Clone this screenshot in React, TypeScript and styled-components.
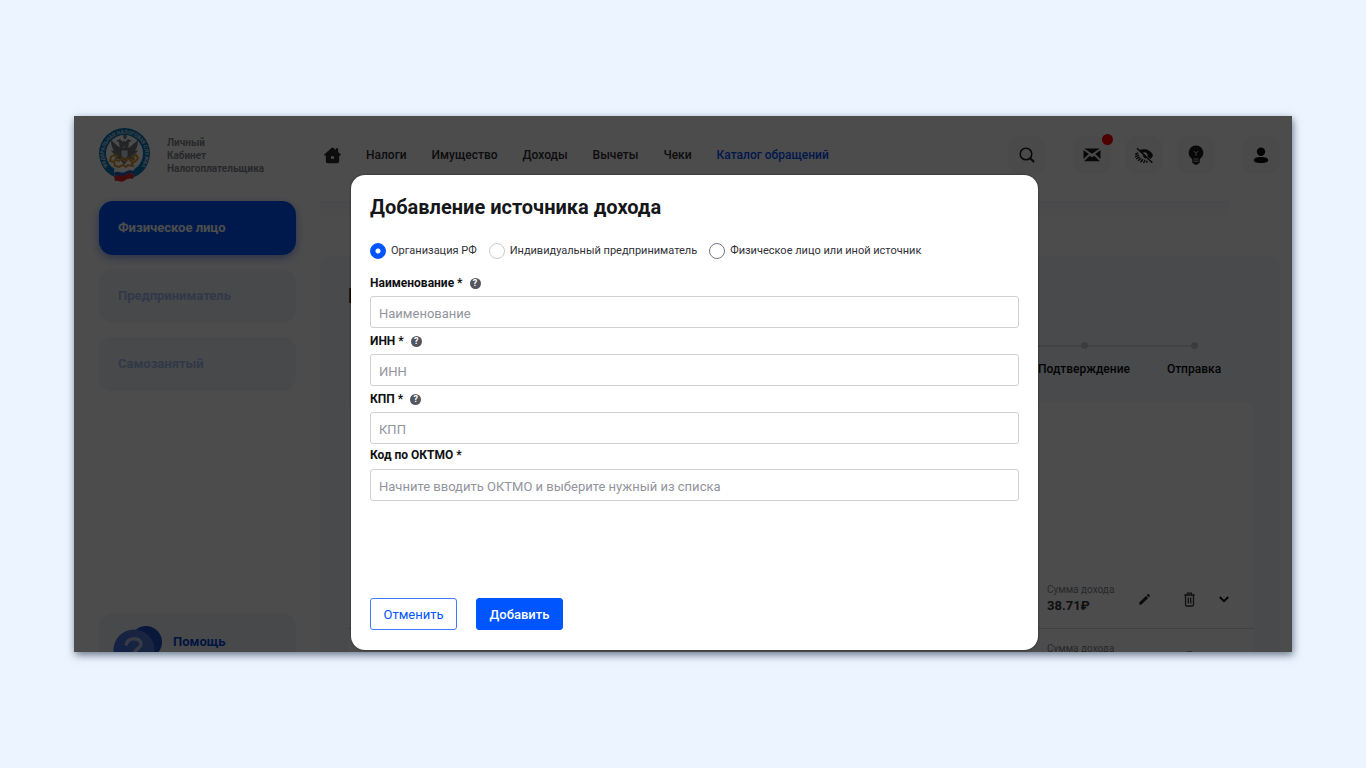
import React from 'react';
import styled, { createGlobalStyle } from 'styled-components';

const GlobalStyle = createGlobalStyle`
  *, *::before, *::after { box-sizing: border-box; }
  body { margin: 0; font-family: Roboto, "Liberation Sans", sans-serif; }
  h1, h2, p { margin: 0; }
  button, input { font: inherit; }
`;

const Page = styled.div`
  display: flex;
  height: 100vh;
  min-height: 700px;
  padding: 116px 74px;
  background: #ecf5ff;
`;

const Window = styled.div`
  position: relative;
  flex: 1;
  display: flex;
  flex-direction: column;
  overflow: hidden;
  background: #fff;
  box-shadow: 1px 3px 8px rgba(20, 35, 60, 0.6);
`;

const Frame = styled.div`
  display: flex;
  flex: 1;
  min-width: 0;
`;

/* ---------- header ---------- */

const Header = styled.header`
  display: flex;
  align-items: center;
  flex: none;
  height: 78px;
  padding: 0 12px 0 25px;
`;

const Brand = styled.a`
  display: flex;
  align-items: center;
  gap: 17px;
  width: 225px;
  color: #85878f;
  font-size: 10px;
  font-weight: 700;
  line-height: 13px;
  text-decoration: none;
`;

const Nav = styled.nav`
  display: flex;
  align-items: center;
  gap: 25px;
`;

const NavLink = styled.a<{ $active?: boolean }>`
  display: flex;
  color: ${p => (p.$active ? '#0050ff' : '#2c2d30')};
  font-size: 12px;
  font-weight: 500;
  line-height: 16px;
  text-decoration: none;
  white-space: nowrap;
`;

const Tools = styled.div`
  display: flex;
  gap: 27px;
  margin-left: auto;
`;

const ToolGroup = styled.div`
  display: flex;
  gap: 14px;
`;

const ToolButton = styled.button`
  position: relative;
  display: grid;
  place-items: center;
  width: 38px;
  height: 38px;
  padding: 0;
  border: 0;
  border-radius: 12px;
  background: #f7f7f8;
  color: #1c1d20;
`;

const Badge = styled.span`
  position: absolute;
  top: -2px;
  right: -2px;
  width: 11px;
  height: 11px;
  border-radius: 50%;
  background: #ff0000;
`;

/* ---------- sidebar ---------- */

const Sidebar = styled.aside`
  display: flex;
  flex: none;
  flex-direction: column;
  gap: 14px;
  width: 222px;
  padding: 7px 0 0 25px;
`;

const RoleButton = styled.button<{ $active?: boolean }>`
  flex: none;
  height: 54px;
  padding: 0 19px 2px;
  border: 0;
  border-radius: 14px;
  background: ${p => (p.$active ? '#0055ff' : '#f1f4fb')};
  box-shadow: ${p => (p.$active ? '0 3px 8px rgba(0, 60, 220, 0.45)' : 'none')};
  color: ${p => (p.$active ? '#ffffff' : '#a6bff2')};
  font-size: 13px;
  font-weight: 700;
  text-align: left;
`;

const HelpCard = styled.a`
  display: flex;
  align-items: flex-start;
  gap: 10px;
  flex: none;
  height: 80px;
  margin-top: 208px;
  padding: 13px 14px;
  border-radius: 14px;
  background: #f1f4fb;
  color: #0046dc;
  font-size: 13px;
  font-weight: 700;
  line-height: 32px;
  text-decoration: none;
`;

/* ---------- main area ---------- */

const Main = styled.main`
  display: flex;
  flex: 1;
  flex-direction: column;
  min-width: 0;
  padding: 7px 12px 0 24px;
`;

const SubBar = styled.div`
  flex: none;
  height: 55px;
  margin-right: 50px;
  background: linear-gradient(#f5f6fa, #ffffff 20px);
`;

const Panel = styled.section`
  display: flex;
  flex: 1;
  flex-direction: column;
  padding: 28px 26px 0 28px;
  border-radius: 14px 14px 0 0;
  background: #f4f7fc;
`;

const PanelTitle = styled.h1`
  height: 58px;
  color: #222;
  font-size: 20px;
  line-height: 24px;
`;

const Steps = styled.ol`
  display: flex;
  justify-content: flex-end;
  height: 60px;
  margin: 0;
  padding: 0 5px 0 0;
  list-style: none;
`;

const Step = styled.li<{ $last?: boolean }>`
  display: flex;
  flex-direction: column;
  align-items: center;
  gap: 13px;
  width: 110px;
  color: #0c0d10;
  font-size: 12px;
  font-weight: 500;
  line-height: 14px;

  &::before {
    content: '';
    width: 7px;
    height: 7px;
    border-radius: 50%;
    background: #c8cacd;
  }
  background: linear-gradient(#dadce0, #dadce0) no-repeat 0 3px / ${p => (p.$last ? '50%' : '100%')} 2px;
`;

const Card = styled.div`
  flex: 1;
  padding-top: 168px;
  border-radius: 8px 8px 0 0;
  background: #fff;
`;

const IncomeRow = styled.div`
  display: flex;
  align-items: flex-start;
  justify-content: flex-end;
  height: 59px;
  padding: 12px 20px 0;
  border-bottom: 1px solid #d8dadd;
`;

const Amount = styled.div`
  width: 87px;
  color: #333438;
  font-size: 13px;
  font-weight: 700;
  line-height: 16px;
`;

const AmountCaption = styled.div`
  color: #85878d;
  font-size: 10px;
  font-weight: 400;
`;

const IconButton = styled.button`
  display: grid;
  place-items: center;
  width: 20px;
  height: 34px;
  padding: 0;
  border: 0;
  background: none;
  color: #1f2023;
`;

const RowActions = styled.div`
  display: grid;
  grid-template-columns: 45px 35px 20px;
`;

/* ---------- dialog ---------- */

const Backdrop = styled.div`
  position: absolute;
  inset: 0;
  display: flex;
  padding: 59px 254px 2px 277px;
  background: rgba(0, 0, 0, 0.7);
`;

const Dialog = styled.form`
  display: flex;
  flex: 1;
  flex-direction: column;
  min-width: 0;
  padding: 20px 19px;
  border-radius: 14px;
  background: #fff;
  box-shadow: 0 0 2px rgba(0, 0, 0, 0.6);
`;

const DialogTitle = styled.h2`
  color: #16171a;
  font-size: 20px;
  line-height: 24px;
`;

const RadioGroup = styled.div`
  display: flex;
  align-items: center;
  gap: 12px;
  height: 16px;
  margin: 24px 0 11px;
`;

const RadioLabel = styled.label`
  display: flex;
  align-items: center;
  gap: 5px;
  color: #303136;
  font-size: 11px;
  line-height: 16px;
  white-space: nowrap;
`;

const Radio = styled.input<{ $muted?: boolean }>`
  appearance: none;
  width: 16px;
  height: 16px;
  margin: 0;
  border: 1px solid ${p => (p.$muted ? '#c9cacf' : '#777a84')};
  border-radius: 50%;

  &:checked {
    border-color: #0055ff;
    background: radial-gradient(circle, #fff 2px, #0055ff 3px);
  }
`;

const FieldHead = styled.div<{ $compact?: boolean }>`
  display: flex;
  align-items: center;
  gap: 7px;
  height: ${p => (p.$compact ? 25 : 26)}px;
  padding-bottom: ${p => (p.$compact ? 3 : 0)}px;
`;

const FieldLabel = styled.label`
  color: #101114;
  font-size: 12px;
  font-weight: 700;
  line-height: 16px;
`;

const Hint = styled.button`
  display: grid;
  place-items: center;
  width: 11px;
  height: 11px;
  margin-top: 1px;
  padding: 0;
  border: 0;
  border-radius: 50%;
  background: #53565e;
  color: #fff;
  font-size: 9px;
  font-weight: 700;
  line-height: 11px;
`;

const TextInput = styled.input`
  display: block;
  width: 100%;
  height: 32px;
  padding: 2px 8px 0;
  border: 1px solid #cfd0d3;
  border-radius: 3px;
  background: #fff;
  color: #16171a;
  font-size: 13px;

  &::placeholder { color: #92949d; opacity: 1; }
`;

const Actions = styled.div`
  display: flex;
  gap: 19px;
  margin-top: auto;
`;

const ActionButton = styled.button<{ $primary?: boolean }>`
  width: 87px;
  height: 32px;
  padding: 0;
  border: 1px solid ${p => (p.$primary ? '#0055ff' : '#3f7bff')};
  border-radius: 3px;
  background: ${p => (p.$primary ? '#0055ff' : '#fff')};
  color: ${p => (p.$primary ? '#fff' : '#0055ff')};
  font-size: 13px;
  font-weight: ${p => (p.$primary ? 500 : 400)};
`;

/* ---------- drawings ---------- */

const Emblem = () => (
  <svg width="51" height="54" viewBox="0 0 51 54" aria-hidden="true">
    <circle cx="25.5" cy="25.5" r="25.5" fill="#0878bd" />
    <circle cx="25.5" cy="25.5" r="18.5" fill="#fff" />
    <defs>
      <path id="ring" d="M11.500 41.500A20.600 20.600 0 1 1 39.500 41.500" />
    </defs>
    <text fill="#d5e2ec" fontSize="5" fontWeight="700" fontFamily="Roboto, sans-serif">
      <textPath href="#ring" startOffset="50%" textAnchor="middle">ФЕДЕРАЛЬНАЯ НАЛОГОВАЯ СЛУЖБА</textPath>
    </text>
    <g fill="#77797d">
      <path d="M22 20c-3-1-6-5-10-8 0 4 1 8 3 11l-3-1c1 3 4 5 7 6l-3 3h5l4 6 5-6h5l-3-3c3-1 6-3 7-6l-3 1c2-3 3-7 3-11-4 3-7 7-10 8z" />
      <path d="M21 11l-4 2 3 1 1 8h3l1-5 1 5h3l1-8 3-1-4-2-3 3-1-2-1 2z" />
      <path d="M24 8l2-2 2 2-1 3h-2z" />
    </g>
    <path d="M22 22h7v6l-3 3-4-3z" fill="#d8d9dc" stroke="#606267" strokeWidth=".7" />
    <path d="M12 29l3-2 3 2-2 3 4 1 3-3 3 3 3-3 3 3 3-2-1-3 3-1 2 3-2 3-4 2 1 3-5-1-2 2-3-2-4 2-4-1-1-4-4-1z" fill="none" stroke="#d8982c" strokeWidth="2" />
    <path d="M15 42c4-3 7 1 11-1s5-2 9-1l-1 11c-4-1-6 0-9 2s-6-1-9 0z" fill="#fff" />
    <path d="M15 45c4-3 7 1 11-1s5-2 9-1v3c-4-1-6 0-9 2s-6-1-10 0z" fill="#1e63c4" />
    <path d="M15 48c4-2 7 1 11-1s5-2 9-1l-1 5c-4-1-6 0-9 2s-6-1-9 0z" fill="#e02828" />
  </svg>
);

const HomeIcon = () => (
  <svg width="17" height="17" viewBox="0 0 17 17" fill="currentColor" aria-hidden="true">
    <path fillRule="evenodd" d="M7.400 1a1.600 1.600 0 0 1 2.200 0l2.300 2V1.300h2.200V5l2.400 2.200c.7.700.3 1.400-.5 1.400h-.8v5.600a2 2 0 0 1-2 2H3.800a2 2 0 0 1-2-2V8.600H1C.2 8.600-.2 7.900.5 7.200zM7 9.200v2.600h3V9.200z" />
  </svg>
);

const SearchIcon = () => (
  <svg width="16" height="16" viewBox="0 0 16 16" fill="none" stroke="currentColor" strokeWidth="1.500" aria-hidden="true">
    <circle cx="7" cy="7" r="5.800" />
    <path d="M11 11l4 4" strokeWidth="1.900" />
  </svg>
);

const MailIcon = () => (
  <svg width="18" height="14" viewBox="0 0 18 14" fill="currentColor" aria-hidden="true">
    <path d="M1.200.5h15.600L9 5.800z" />
    <path d="M.5 2L5.800 6 .5 11zM17.500 2L12.200 6l5.300 5zM1 13.300l5.800-5.600L9 9.200l2.200-1.500 5.800 5.600z" />
  </svg>
);

const EyeOffIcon = () => (
  <svg width="20" height="17" viewBox="0 0 20 17" aria-hidden="true">
    <path
      d="M5 3.300C9.500 1 16.500 2 19 8.200c-.6 1.600-1.500 2.900-2.800 3.900L13.600 9.700C14.500 6.500 11.500 4.200 8.500 5.800z"
      fill="currentColor"
    />
    <path
      d="M1.200 7.500l3-1.500M1 9.800l4-1.600M2.200 11.900l3.600-2M4 13.800l3.200-2.600M6.500 15.300l2.500-3M9.500 16l1.700-3.200M12.500 15.700l.7-2"
      fill="none"
      stroke="currentColor"
      strokeWidth="1.400"
    />
    <path d="M9.500 8.200l2.700 2.600" stroke="currentColor" strokeWidth="2.500" />
    <path d="M3 1.200l15.300 14.600" stroke="currentColor" strokeWidth="1.500" />
  </svg>
);

const BulbIcon = () => (
  <svg width="16" height="20" viewBox="0 0 16 20" aria-hidden="true">
    <path d="M8 .5a7.300 7.300 0 0 0-5 12.600c1 .9 1.300 1.400 1.300 2.400v2c0 .6.400 1 1 1h.7l.8 1.200h2.400l.8-1.200h.7c.6 0 1-.4 1-1v-2c0-1 .3-1.500 1.300-2.400A7.300 7.300 0 0 0 8 .5z" fill="currentColor" />
    <path d="M5.800 6L8 8.500 10.200 6M8 8.500V11M5.500 14h5M5.500 16.200h5" fill="none" stroke="#c4c4c6" />
  </svg>
);

const UserIcon = () => (
  <svg width="16" height="17" viewBox="0 0 16 17" fill="#050506" aria-hidden="true">
    <circle cx="8" cy="4.700" r="4.200" />
    <path d="M.8 13c0-2 3-3 7.200-3s7.200 1 7.200 3-1.800 3-7.200 3-7.200-1-7.200-3z" />
  </svg>
);

const PencilIcon = () => (
  <svg width="11" height="11" viewBox="0 0 11 11" fill="currentColor" aria-hidden="true">
    <path d="M.3 8.400L7 1.900l2.100 2.100-6.600 6.600-2.200.2zM7.700 1.200l.9-.9c.3-.3.8-.3 1.100 0l1 1c.3.300.3.800 0 1.100l-.9.900z" />
  </svg>
);

const TrashIcon = () => (
  <svg width="11" height="15" viewBox="0 0 11 15" fill="none" stroke="#3a3b40" strokeWidth="1.300" aria-hidden="true">
    <path d="M.3 3h10.400M3.500 3V1.200h4V3M1.500 3v9.800c0 .8.4 1.200 1.200 1.200h5.600c.8 0 1.200-.4 1.200-1.200V3M4.300 5.500v6M6.700 5.500v6" />
  </svg>
);

const ChevronIcon = () => (
  <svg width="10" height="7" viewBox="0 0 10 7" fill="none" stroke="#000" strokeWidth="1.800" aria-hidden="true">
    <path d="M.8 1L5 5.200 9.200 1" />
  </svg>
);

const HelpIcon = () => (
  <svg width="50" height="46" viewBox="0 0 50 46" aria-hidden="true">
    <defs>
      <linearGradient id="bubble" x1="0" y1="1" x2="1" y2="0">
        <stop offset="0" stopColor="#3265e4" />
        <stop offset="1" stopColor="#5f82d2" />
      </linearGradient>
    </defs>
    <circle cx="33" cy="16" r="16" fill="#1d4dc4" />
    <circle cx="21" cy="24" r="20.500" fill="url(#bubble)" />
    <path d="M13.500 18c1.500-7 14-7 14.500 0 .3 4-7 5-7 11" fill="none" stroke="#b9c5e4" strokeWidth="3.500" strokeLinecap="round" />
  </svg>
);

/* ---------- page ---------- */

const navItems = ['Налоги', 'Имущество', 'Доходы', 'Вычеты', 'Чеки', 'Каталог обращений'];
const roles = ['Физическое лицо', 'Предприниматель', 'Самозанятый'];
const sources = ['Организация РФ', 'Индивидуальный предприниматель', 'Физическое лицо или иной источник'];
const fields = [
  { id: 'name', label: 'Наименование *', placeholder: 'Наименование', hint: true },
  { id: 'inn', label: 'ИНН *', placeholder: 'ИНН', hint: true },
  { id: 'kpp', label: 'КПП *', placeholder: 'КПП', hint: true },
  { id: 'oktmo', label: 'Код по ОКТМО *', placeholder: 'Начните вводить ОКТМО и выберите нужный из списка', hint: false },
];

const Income = ({ amount }: { amount?: string }) => (
  <IncomeRow>
    <Amount>
      <AmountCaption>Сумма дохода</AmountCaption>
      {amount}
    </Amount>
    <RowActions>
      <IconButton type="button" aria-label="Изменить"><PencilIcon /></IconButton>
      <IconButton type="button" aria-label="Удалить"><TrashIcon /></IconButton>
      <IconButton type="button" aria-label="Развернуть"><ChevronIcon /></IconButton>
    </RowActions>
  </IncomeRow>
);

export default function App() {
  return (
    <Page>
      <GlobalStyle />
      <Window>
        <Header>
          <Brand href="#">
            <Emblem />
            <span>Личный<br />Кабинет<br />Налогоплательщика</span>
          </Brand>
          <Nav>
            <NavLink href="#" aria-label="Главная"><HomeIcon /></NavLink>
            {navItems.map(item => (
              <NavLink key={item} href="#" $active={item === 'Каталог обращений'}>{item}</NavLink>
            ))}
          </Nav>
          <Tools>
            <ToolButton type="button" aria-label="Поиск"><SearchIcon /></ToolButton>
            <ToolGroup>
              <ToolButton type="button" aria-label="Сообщения"><MailIcon /><Badge /></ToolButton>
              <ToolButton type="button" aria-label="Версия для слабовидящих"><EyeOffIcon /></ToolButton>
              <ToolButton type="button" aria-label="Подсказки"><BulbIcon /></ToolButton>
            </ToolGroup>
            <ToolButton type="button" aria-label="Профиль"><UserIcon /></ToolButton>
          </Tools>
        </Header>
        <Frame>
          <Sidebar>
            {roles.map((role, i) => (
              <RoleButton key={role} type="button" $active={i === 0}>{role}</RoleButton>
            ))}
            <HelpCard href="#"><HelpIcon />Помощь</HelpCard>
          </Sidebar>
          <Main>
            <SubBar />
            <Panel>
              <PanelTitle>П</PanelTitle>
              <Steps>
                <Step>Подтверждение</Step>
                <Step $last>Отправка</Step>
              </Steps>
              <Card>
                <Income amount="38.71₽" />
                <Income />
              </Card>
            </Panel>
          </Main>
        </Frame>
        <Backdrop>
          <Dialog role="dialog" aria-labelledby="dialog-title">
            <DialogTitle id="dialog-title">Добавление источника дохода</DialogTitle>
            <RadioGroup>
              {sources.map((source, i) => (
                <RadioLabel key={source}>
                  <Radio type="radio" name="source" defaultChecked={i === 0} $muted={i === 1} />
                  {source}
                </RadioLabel>
              ))}
            </RadioGroup>
            {fields.map(field => (
              <div key={field.id}>
                <FieldHead $compact={!field.hint}>
                  <FieldLabel htmlFor={field.id}>{field.label}</FieldLabel>
                  {field.hint && <Hint type="button">?</Hint>}
                </FieldHead>
                <TextInput id={field.id} placeholder={field.placeholder} />
              </div>
            ))}
            <Actions>
              <ActionButton type="button">Отменить</ActionButton>
              <ActionButton type="submit" $primary>Добавить</ActionButton>
            </Actions>
          </Dialog>
        </Backdrop>
      </Window>
    </Page>
  );
}
